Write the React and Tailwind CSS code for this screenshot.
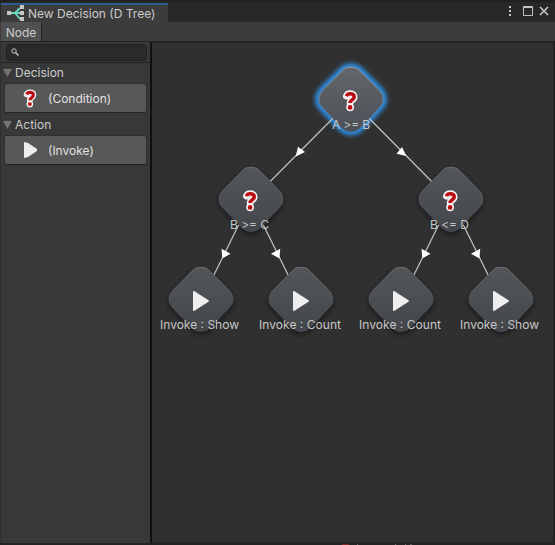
const UI = "font-['Inter','Liberation_Sans',sans-serif]";

const nodes = [
  { x: 351, y: 99, label: 'A >= B', kind: 'q', left: -19, width: 38, selected: true },
  { x: 251, y: 199, label: 'B >= C', kind: 'q', left: -21, width: 39 },
  { x: 451, y: 199, label: 'B <= D', kind: 'q', left: -21, width: 39 },
  { x: 201, y: 299, label: 'Invoke : Show', kind: 'p', left: -41, width: 79 },
  { x: 301, y: 299, label: 'Invoke : Count', kind: 'p', left: -42, width: 82 },
  { x: 401, y: 299, label: 'Invoke : Count', kind: 'p', left: -42, width: 82 },
  { x: 501, y: 299, label: 'Invoke : Show', kind: 'p', left: -41, width: 79 },
];

const links = [
  [351, 99, 251, 199, 'M-3 -6.300L4 -1L-5.300 3.500Z'],
  [351, 99, 451, 199, 'M1 -6L5.300 3L-4.500 .7Z'],
  [251, 199, 201, 299, 'M-4.500 -4.300L4.500 .7L-3.700 5.500Z'],
  [251, 199, 301, 299, 'M4.200 -4.300L-5 .7L3.500 5.500Z'],
  [451, 199, 401, 299, 'M-4.500 -4.300L4.500 .7L-3.700 5.500Z'],
  [451, 199, 501, 299, 'M4.200 -4.300L-5 .7L3.500 5.500Z'],
];

const diamond =
  'M-5 -32Q0 -33.500 5 -32Q7.500 -31 10 -28L28 -10Q32.500 -6 32.500 0Q32.500 5 28 9L10 28Q6 32.500 0 32.500Q-6 32.500 -10 28L-28 9Q-32.500 5 -32.500 0Q-32.500 -6 -28 -10L-10 -28Q-7.500 -31 -5 -32Z';

const hook = 'M-3.900 -3.600C-2.500 -7 3.900 -6.700 3.900 -2.800C3.900 .2 -.2 .2 -.2 3.200';

function Question() {
  return (
    <g strokeLinejoin="round" fill="none">
      <path d={hook} stroke="#f4f0f0" strokeWidth="6.800" strokeLinecap="round" />
      <circle cx="-.2" cy="7.600" r="3.900" fill="#f4f0f0" />
      <path d={hook} stroke="#b80c12" strokeWidth="3.600" />
      <circle cx="-.2" cy="7.700" r="2.300" fill="#b80c12" />
    </g>
  );
}

function Graph() {
  return (
    <svg className="block h-[500px] w-[401px]" viewBox="152 43 401 500">
      <defs>
        <linearGradient id="body" x1="0" y1="0" x2="0" y2="1">
          <stop offset="0" stopColor="#535659" />
          <stop offset="1" stopColor="#43464b" />
        </linearGradient>
        <linearGradient id="sel" x1="0" y1="0" x2="0" y2="1">
          <stop offset="0" stopColor="#63676c" />
          <stop offset="1" stopColor="#4c5056" />
        </linearGradient>
        <linearGradient id="rim" x1="0" y1="0" x2="0" y2="1">
          <stop offset="0" stopColor="#6c6e72" />
          <stop offset=".4" stopColor="#54575b" />
          <stop offset="1" stopColor="#43464b" />
        </linearGradient>
        <linearGradient id="selRim" x1="0" y1="0" x2="0" y2="1">
          <stop offset="0" stopColor="#94979b" />
          <stop offset=".5" stopColor="#6c7a88" />
          <stop offset="1" stopColor="#4a5665" />
        </linearGradient>
        <filter id="blur" x="-30%" y="-30%" width="160%" height="160%">
          <feGaussianBlur stdDeviation="2.300" />
        </filter>
      </defs>
      {nodes.map((n, i) => (
        <path
          key={i}
          d={diamond}
          transform={`translate(${n.x} ${n.y + (n.selected ? 0.5 : 3)})`}
          fill={n.selected ? '#2e8de0' : '#191919'}
          stroke={n.selected ? '#2e8de0' : 'none'}
          strokeWidth="7"
          opacity={n.selected ? 1 : 0.8}
          filter="url(#blur)"
        />
      ))}
      {links.map(([a, b, c, d], i) => (
        <line key={i} x1={a} y1={b + 1} x2={c} y2={d + 2} stroke="#c4c4c4" strokeWidth="1.200" />
      ))}
      {links.map(([a, b, c, d, arrow], i) => (
        <path key={i} transform={`translate(${(a + c) / 2} ${(b + d) / 2 + 4})`} d={arrow} fill="#fff" />
      ))}
      {nodes.map((n, i) => (
        <g key={i} transform={`translate(${n.x} ${n.y})`}>
          <path transform="translate(0 .5) scale(.985)" d={diamond} fill={n.selected ? 'url(#sel)' : 'url(#body)'} stroke={n.selected ? 'url(#selRim)' : 'url(#rim)'} strokeWidth="1" />
          {n.kind === 'q' ? (
            <g transform="translate(-.7 .7)"><Question /></g>
          ) : (
            <path d="M-8 -7Q-8 -8.500 -6.500 -7.700L7.500 1.200Q8.500 2 7.500 2.800L-6.500 11.700Q-8 12.500 -8 11Z" fill="#eee" />
          )}
          <text x={n.left} y="30" fontSize="12" textLength={n.width} fill="#c6c6c6" className={UI}>
            {n.label}
          </text>
        </g>
      ))}
    </svg>
  );
}

function Section({ title, item, icon }) {
  return (
    <section className="h-[52px] pt-px">
      <h2 className="flex h-[17px] items-center gap-[3px] pl-[2px] text-[12px]">
        <svg className="h-2 w-[9px]" viewBox="0 0 9 8"><path d="M0 0H9L4.500 8Z" fill="#747474" /></svg>
        {title}
      </h2>
      <button className="ml-[3px] mt-[2px] flex h-[30px] w-[143px] items-center rounded-[3px] border border-[#303030] border-b-[#242424] bg-[#585858] text-[12px] text-[#e2e2e2]">
        <svg className="ml-[14px] h-[22px] w-[22px]" viewBox="-11 -11 22 22">{icon}</svg>
        <span className="ml-[7px] mt-px">{item}</span>
      </button>
    </section>
  );
}

export default function App() {
  return (
    <div className={`flex h-[545px] w-[555px] flex-col overflow-hidden bg-[#282828] text-[12px] leading-4 text-[#cbcbcb] ${UI}`}>
      <header className="flex h-[22px] shrink-0 items-end justify-between border-t-2 border-[#202020] pl-px">
        <div className="flex h-[19px] w-[167px] items-center border-t-2 border-[#2c5d8e] bg-[#3c3c3c] pl-[6px]">
          <svg className="h-[18px] w-[18px] shrink-0" viewBox="0 0 18 18">
            <path d="M4 8H8L13 3M8 8H14M8 8L13 14" fill="none" stroke="#68d8bf" strokeWidth="1.800" />
            <path d="M0 6H4V10H0ZM13 0H17V4H13ZM13 6H17V10H13ZM13 12H17V16H13Z" fill="#c4c4c4" />
          </svg>
          <span className="ml-[3px] mt-px whitespace-nowrap">New Decision (D Tree)</span>
        </div>
        <svg className="h-[20px] w-[56px]" viewBox="499 2 56 20" fill="none" stroke="#c4c4c4">
          <path d="M509 6h2v2h-2zM509 10h2v2h-2zM509 14h2v2h-2z" fill="#c4c4c4" stroke="none" />
          <path d="M523.500 6.500H532.500V15.500H523.500ZM523 7.500H533" />
          <path d="M540 7L548 15M548 7L540 15" strokeWidth="1.700" />
        </svg>
      </header>
      <nav className="flex h-[20px] shrink-0 border-b border-[#242424] bg-[#3c3c3c] pl-px">
        <div className="flex w-[41px] items-center justify-center border-r border-[#242424] bg-[#505050] pt-[2px]">Node</div>
      </nav>
      <div className="flex h-[501px] shrink-0">
        <aside className="w-[150px] border-l border-[#303030] bg-[#383838]">
          <div className="flex h-[21px] items-center border-b border-[#242424] pl-[5px]">
            <div className="flex h-[17px] w-[141px] items-center rounded-[4px] border border-[#202020] bg-[#2a2a2a] pl-[4px]">
              <svg className="h-2 w-2" viewBox="0 0 8 8" fill="none" stroke="#c4c4c4"><circle cx="3" cy="3" r="2.200" /><path d="M4.700 4.700L7.500 7.500" strokeWidth="1.500" /></svg>
            </div>
          </div>
          <Section title="Decision" item="(Condition)" icon={<g transform="translate(0 -.5) scale(.86)"><Question /></g>} />
          <Section title="Action" item="(Invoke)" icon={<path d="M-6 -8L-2 -7L7 -1V1L-2 7L-6 8Z" fill="#eee" />} />
        </aside>
        <main className="h-[502px] w-[405px] border-l-2 border-r-2 border-t border-b-2 border-[#222] border-l-[#101010] bg-[#303030]">
          <Graph />
        </main>
      </div>
      <footer className="flex h-[2px] items-end bg-[#242424]">
        <span className="ml-[342px] h-px w-[7px] bg-[#7c2929]" />
        <span className="ml-[8px] h-px w-px bg-[#6b6b6b]" />
        <span className="ml-[37px] h-px w-px bg-[#6b6b6b]" />
        <span className="ml-[9px] h-px w-px bg-[#6b6b6b]" />
        <span className="ml-[4px] h-px w-[2px] bg-[#5b5b5b]" />
      </footer>
    </div>
  );
}
